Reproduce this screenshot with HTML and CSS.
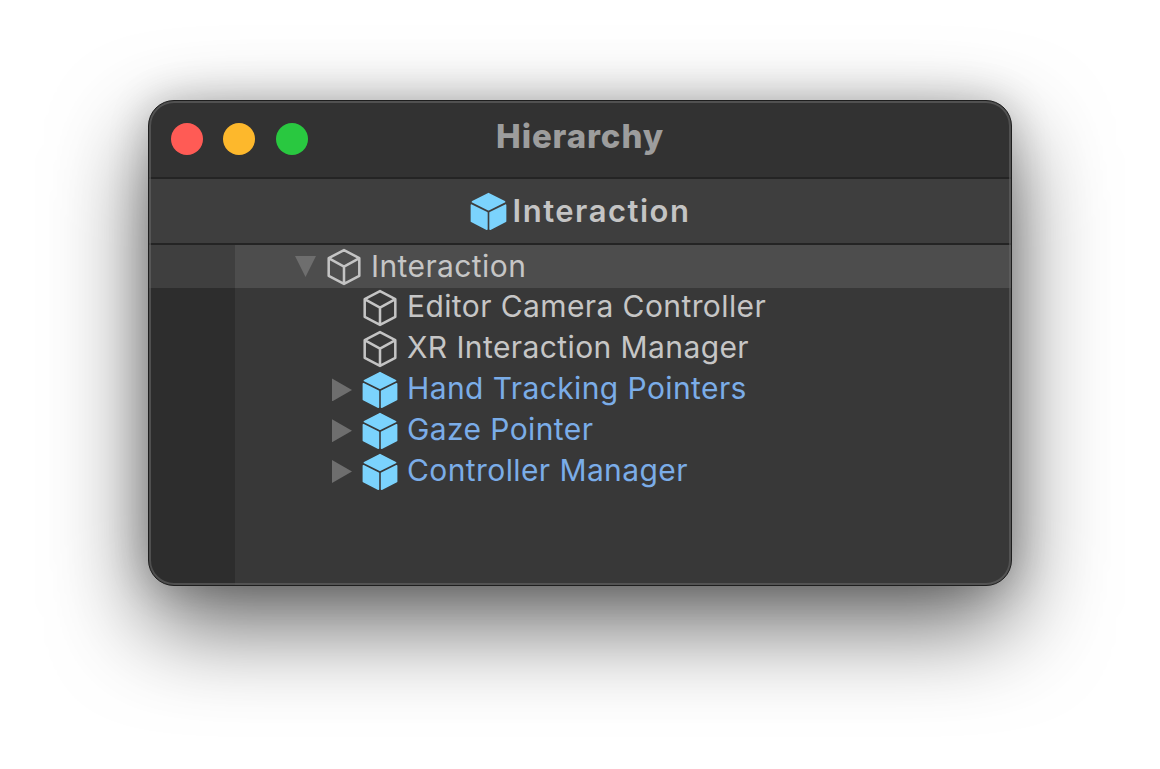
FILE: index.html
```
<!DOCTYPE html>
<html lang="en">
<head>
<meta charset="utf-8">
<title>Hierarchy</title>
<link rel="stylesheet" href="styles.css">
</head>
<body>
<svg class="defs" width="0" height="0" aria-hidden="true">
  <symbol id="cube-line" viewBox="0 0 34 36">
    <path d="M17 2 L31.5 9.6 V26.4 L17 34 L2.5 26.4 V9.6 Z M2.8 9.8 L17 17.6 L31.2 9.8 M17 17.6 V33.6" fill="none" stroke="#c4c4c4" stroke-width="2.4" stroke-linejoin="round"/>
  </symbol>
  <symbol id="cube-solid" viewBox="0 0 36 38">
    <g fill="#7bd3fd" stroke="#7bd3fd" stroke-width="1.6" stroke-linejoin="round">
      <path d="M18 1.6 L33.6 9.6 L18 17.2 L2.4 9.6 Z"/>
      <path d="M1.4 12.8 L16.4 20.2 V36.2 L1.4 28.6 Z"/>
      <path d="M34.6 12.8 L19.6 20.2 V36.2 L34.6 28.6 Z"/>
    </g>
  </symbol>
</svg>
<main class="window">
  <header class="titlebar">
    <div class="lights">
      <span class="light red"></span>
      <span class="light yellow"></span>
      <span class="light green"></span>
    </div>
    <h1 class="title">Hierarchy</h1>
  </header>
  <div class="crumb">
    <svg class="crumb-icon"><use href="#cube-solid"/></svg>
    <span class="crumb-text">Interaction</span>
  </div>
  <div class="tree">
    <div class="row root">
      <span class="gutter"></span>
      <div class="content depth0">
        <span class="arrow down"></span>
        <svg class="icon"><use href="#cube-line"/></svg>
        <span class="label">Interaction</span>
      </div>
    </div>
    <div class="row">
      <span class="gutter"></span>
      <div class="content depth1">
        <span class="arrow none"></span>
        <svg class="icon"><use href="#cube-line"/></svg>
        <span class="label">Editor Camera Controller</span>
      </div>
    </div>
    <div class="row">
      <span class="gutter"></span>
      <div class="content depth1">
        <span class="arrow none"></span>
        <svg class="icon"><use href="#cube-line"/></svg>
        <span class="label">XR Interaction Manager</span>
      </div>
    </div>
    <div class="row">
      <span class="gutter"></span>
      <div class="content depth1">
        <span class="arrow right"></span>
        <svg class="icon"><use href="#cube-solid"/></svg>
        <span class="label prefab">Hand Tracking Pointers</span>
      </div>
    </div>
    <div class="row">
      <span class="gutter"></span>
      <div class="content depth1">
        <span class="arrow right"></span>
        <svg class="icon"><use href="#cube-solid"/></svg>
        <span class="label prefab">Gaze Pointer</span>
      </div>
    </div>
    <div class="row">
      <span class="gutter"></span>
      <div class="content depth1">
        <span class="arrow right"></span>
        <svg class="icon"><use href="#cube-solid"/></svg>
        <span class="label prefab">Controller Manager</span>
      </div>
    </div>
    <div class="filler">
      <span class="gutter"></span>
      <div class="content"></div>
    </div>
  </div>
</main>
</body>
</html>
```
FILE: styles.css
```
* { box-sizing: border-box; }
html, body { margin: 0; height: 100%; background: #fff; overflow: hidden; }
body { padding: 100px 148px 0; font-family: Inter, "Liberation Sans", sans-serif; }
.defs { position: absolute; }

.window {
  width: 864px;
  height: 486px;
  border-radius: 26px;
  background: #383838;
  display: flex;
  flex-direction: column;
  overflow: hidden;
  border: 1px solid #1e1e1e;
  box-shadow: 0 38px 95px rgba(0,0,0,.62), 0 0 40px rgba(0,0,0,.2);
  position: relative;
}
.window::after {
  content: "";
  position: absolute;
  inset: 0;
  border: 2px solid #666;
  border-radius: 25px;
  opacity: .6;
  pointer-events: none;
}

.titlebar {
  height: 76px;
  background: #323232;
  display: flex;
  align-items: center;
  justify-content: center;
  position: relative;
  flex: none;
}
.lights {
  position: absolute;
  left: 22px;
  top: 22px;
  display: flex;
  gap: 20px;
}
.light { width: 32px; height: 32px; border-radius: 50%; display: block; }
.red { background: #ff5b55; }
.yellow { background: #fdb82c; }
.green { background: #29c840; margin-left: 1px; }
.title {
  margin: 0;
  font-size: 33px;
  font-weight: 800;
  color: #9d9d9d;
  letter-spacing: .9px;
  line-height: 1;
  position: relative;
  top: -3px;
}

.crumb {
  height: 68px;
  flex: none;
  background: #3e3e3e;
  border-top: 2px solid #242424;
  border-bottom: 2px solid #242424;
  display: flex;
  align-items: center;
  justify-content: center;
  gap: 6px;
}
.crumb-icon { width: 37px; height: 39px; flex: none; }
.crumb-text { font-size: 31px; font-weight: 600; color: #c4c4c4; letter-spacing: 1.5px; position: relative; top: -1px; }

.tree { flex: 1; display: flex; flex-direction: column; }
.row { height: 40.8px; display: flex; flex: none; }
.row.root { height: 43px; background: #3f3f3f; }
.gutter { width: 86px; flex: none; background: #2d2d2d; }
.root .gutter { background: #3f3f3f; }
.content { flex: 1; display: flex; align-items: center; }
.root .content { background: #4d4d4d; }
.depth0 { padding-left: 60px; }
.depth1 { padding-left: 97px; }
.arrow { flex: none; }
.arrow.none { width: 20px; margin-right: 10px; }
.arrow.down { width: 21px; height: 21px; margin-right: 10px; background: #6e6e6e; clip-path: polygon(0 0, 100% 0, 50% 100%); }
.arrow.right { width: 20px; height: 23px; margin-right: 10px; background: #6e6e6e; clip-path: polygon(0 0, 100% 50%, 0 100%); }
.icon { width: 36px; height: 38px; flex: none; margin-right: 9px; }
.label { font-size: 30px; letter-spacing: .4px; color: #c6c6c6; white-space: nowrap; line-height: 1; position: relative; top: -2px; }
.root .label { top: -1px; }
.prefab { color: #7bade8; }

.filler { flex: 1; display: flex; }
.filler .content { background: #383838; }
```
